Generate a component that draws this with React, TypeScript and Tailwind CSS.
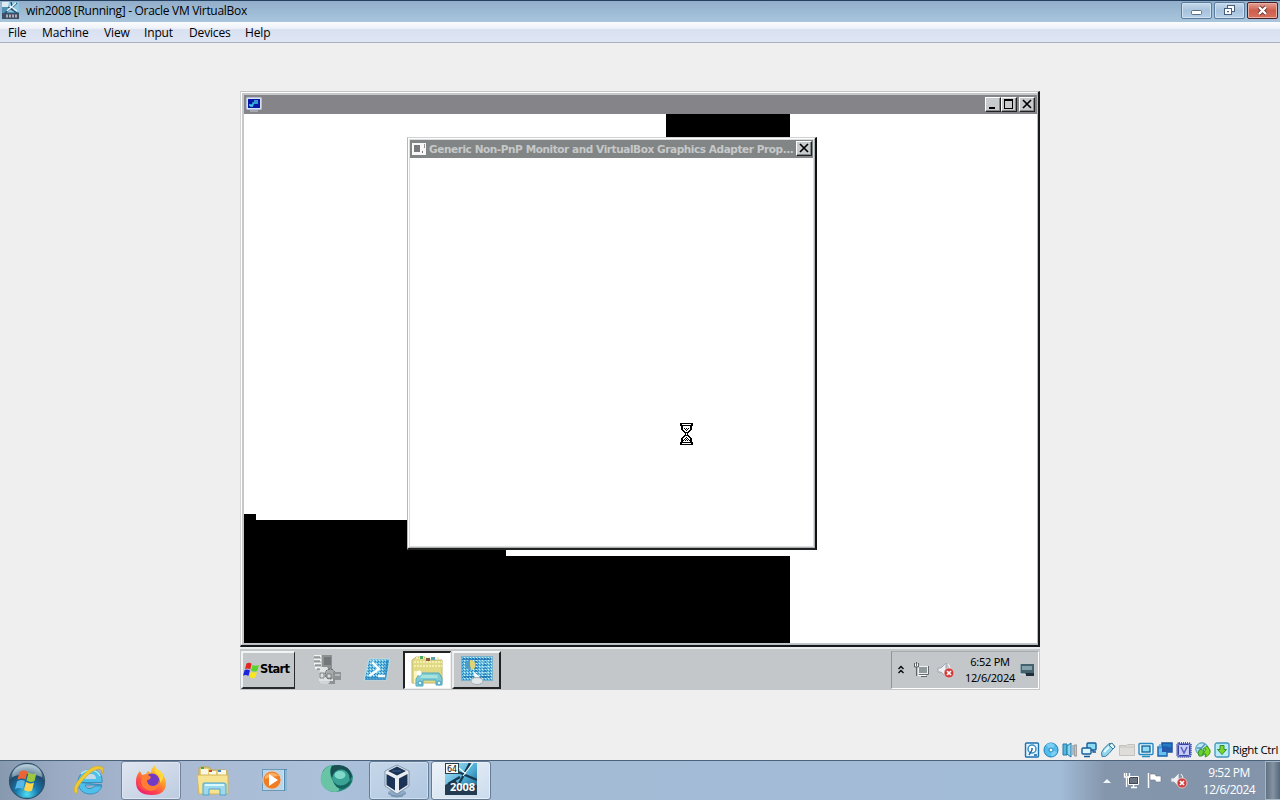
import React from "react";

type IconProps = { className?: string };

const VmMini = ({ className = "" }: IconProps) => (
  <svg className={className} width="17" height="17" viewBox="0 0 17 17">
    <rect width="17" height="17" fill="#4f8fb4" />
    <path d="M0 0H7V5H0Z" fill="#dceaf2" />
    <path d="M7 0H17V10H5Z" fill="#8cc7e2" />
    <path d="M15 1L2 12M6 5l9 6M9 0l2 8" stroke="#244a68" strokeWidth="1.3" />
    <path d="M14 1L5 9M8 4l7 5" stroke="#f2fafd" strokeWidth="1.2" />
    <rect y="11" width="17" height="6" fill="#3a5068" />
    <path d="M4 14h11" stroke="#b9a9b3" strokeWidth="3" strokeDasharray="2 1" />
  </svg>
);

const HostButton = ({ kind }: { kind: "min" | "restore" | "close" }) => (
  <div
    className={
      "flex items-center justify-center h-[17px] rounded-[2px] border " +
      (kind === "close"
        ? "w-[31px] border-[#4d2028] bg-linear-to-b from-[#e2a095] via-[#cf5d4d] to-[#d9705c] shadow-[inset_0_0_0_1px_#e9b0a6]"
        : "w-[31px] border-[#5b7c9e] bg-linear-to-b from-[#c5d9eb] via-[#a8c2dc] to-[#b5d0e8] shadow-[inset_0_0_0_1px_#cfe0ef]")
    }
  >
    <svg width="15" height="13" viewBox="0 0 15 13">
      {kind === "min" && <rect x="2.5" y="6.5" width="10" height="4" rx="1" fill="#fff" stroke="#5a7087" />}
      {kind === "restore" && (
        <g fill="#fff" stroke="#465f7f">
          <rect x="5.5" y="1.5" width="7" height="6" />
          <rect x="2.5" y="4.5" width="7" height="6" />
          <rect x="5" y="7" width="2" height="1.2" fill="#465f7f" stroke="none" />
        </g>
      )}
      {kind === "close" && (
        <g fill="none">
          <path d="M4 3l7 7M11 3l-7 7" stroke="#6a3a38" strokeWidth="4" />
          <path d="M4 3l7 7M11 3l-7 7" stroke="#fff" strokeWidth="2.3" />
        </g>
      )}
    </svg>
  </div>
);

const ClassicButton = ({ kind }: { kind: "min" | "max" | "close" }) => (
  <div className="w-4 h-[15px] bg-[#c7cbcd] border border-t-white border-l-white border-r-[#222] border-b-[#222] shadow-[inset_-1px_-1px_0_#85898c]">
    <svg width="14" height="13" viewBox="0 0 14 13" shapeRendering="crispEdges">
      {kind === "min" && <rect x="3" y="9" width="6" height="2" fill="#000" />}
      {kind === "max" && <path d="M2 1h9v10H2zM3 3v7h7V3z" fill="#000" fillRule="evenodd" />}
      {kind === "close" && (
        <path d="M3 2l8 8M11 2l-8 8" stroke="#000" strokeWidth="1.7" shapeRendering="auto" />
      )}
    </svg>
  </div>
);

const DisplayIcon = () => (
  <svg width="16" height="16" viewBox="0 0 16 16">
    <rect x="0.5" y="0.5" width="15" height="12" rx="1" fill="#d8e1f3" stroke="#b4bed4" />
    <rect x="2" y="2" width="12" height="9" fill="#0715a8" />
    <path d="M3 8h4V6h5M4 9h3M8 4h4" stroke="#3fc8dd" strokeWidth="1.3" fill="none" />
    <path d="M4 13h8v2H4z" fill="#a4a7ab" />
  </svg>
);

const Hourglass = () => (
  <svg width="13" height="22" viewBox="0 0 13 22" shapeRendering="crispEdges">
    <path d="M0 0h13v3h-1v4h-1v1h-1v1H9v1H8v2h1v1h1v1h1v1h1v4h1v3H0v-3h1v-4h1v-1h1v-1h1v-1h1v-2H4V9H3V8H2V7H1V3H0z" fill="#000" />
    <path d="M2 1h9v1H2zM3 3h7v4H9v1H8v1H7v4h1v1h1v1h1v4H3v-4h1v-1h1v-1h1V9H5V8H4V7H3zM2 20h9v1H2z" fill="#fff" />
    <path d="M4 5h1v1H4zM6 5h1v1H6zM8 5h1v1H8zM5 6h1v1H5zM7 6h1v1H7zM6 7h1v1H6zM6 9h1v1H6zM6 12h1v1H6zM6 14h1v1H6zM5 15h1v1H5zM7 15h1v1H7zM4 16h1v1H4zM6 16h1v1H6zM8 16h1v1H8zM3 17h1v1H3zM5 17h1v1H5zM7 17h1v1H7zM9 17h1v1H9z" fill="#000" />
  </svg>
);

const WinFlag = () => (
  <svg width="17" height="17" viewBox="0 0 17 17" className="shrink-0">
    <path d="M3.5 1.5Q6 0 8.6 1.8L7.2 7.4Q4.8 5.8 2 7z" fill="#e42621" />
    <path d="M9.6 3Q12.5 4.6 16 3L14.2 9Q11 10.3 8 8.5z" fill="#58d327" />
    <path d="M1.7 8Q4.5 6.8 7 8.6L5.4 14Q3 12.3 0 13.5z" fill="#1c25dd" />
    <path d="M7.8 9.6Q11 11.3 14 10L12.3 15.5Q9.2 17 6.3 15z" fill="#fae61d" />
  </svg>
);

const ServerIcon = () => (
  <svg width="30" height="32" viewBox="0 0 30 32">
    <path d="M10 1h10v14H10z" fill="#8e9192" />
    <path d="M12 3h7v8h-7z" fill="#73777a" />
    <path d="M2 2h7M2 6h7M2 10h7M3 14h6" stroke="#f2f4f4" strokeWidth="2" />
    <path d="M2 3h6M2 7h6M3 11h6M5 15h5" stroke="#66696b" />
    <path d="M8 13h7l2 3h5v11H7z" fill="#e0e3e3" />
    <circle cx="18" cy="20" r="5" fill="#a6aaac" stroke="#54585a" strokeDasharray="2 1" />
    <path d="M8 19h4v5H8zM15 20h4v4h-4z" fill="#dcdfe0" stroke="#696d70" strokeWidth=".8" />
    <path d="M21 18h8v8h-6v4h-7v-3h5z" fill="#8f9295" />
    <path d="M9 27h8v2H9zM23 21h5" stroke="#dbe0e1" fill="none" />
  </svg>
);

const PowerShellIcon = () => (
  <svg width="28" height="24" viewBox="0 0 28 24">
    <defs>
      <pattern id="dither" width="3" height="3" patternUnits="userSpaceOnUse">
        <rect width="3" height="3" fill="#65bde2" />
        <path d="M0 0h1v1H0zM2 1h1v1H2z" fill="#2c80bb" />
        <path d="M1 2h1v1H1z" fill="#c8f1f8" />
      </pattern>
    </defs>
    <path d="M6 1h21l-4 21H1z" fill="url(#dither)" stroke="#b8e0ee" />
    <path d="M23 2h3l-3 20H2l1-3h18z" fill="#267fb9" opacity=".65" />
    <path d="M9 4l7 7-10 7M15 18h7" fill="none" stroke="#f5fdff" strokeWidth="2.5" />
  </svg>
);

const GuestFolderIcon = () => (
  <svg width="34" height="32" viewBox="0 0 34 32">
    <path d="M1 5l4-3h9l3 3h14v23H1z" fill="#e0da84" stroke="#c0b770" />
    <path d="M3 7h28M3 11h28M5 3h24" stroke="#f4efb1" strokeWidth="2" strokeDasharray="2 1" />
    <path d="M9 1h3v3H9z" fill="#4eaa61" />
    <path d="M15 3h4v3h-4z" fill="#8c5948" />
    <path d="M20 2h4v3h-4z" fill="#5da4ae" />
    <path d="M3 16h4v12H3z" fill="#faf4bd" />
    <path d="M9 18h19l3 5v7h-6v-5H12v6H5v-7z" fill="#7fcbd2" stroke="#56a9bc" />
    <path d="M11 20h15l1 3H9z" fill="#a6e3dc" />
    <circle cx="9" cy="28" r="2" fill="#dff9f5" stroke="#3a98c7" />
    <circle cx="28" cy="28" r="2" fill="#dff9f5" stroke="#3a98c7" />
    <circle cx="8" cy="18" r="2.5" fill="#fff" />
  </svg>
);

const ControlPanelIcon = () => (
  <svg width="34" height="30" viewBox="0 0 34 30">
    <rect x="1.5" y="1.5" width="31" height="24" fill="url(#dither)" stroke="#79b1cc" />
    <path d="M3 4h28M4 22h27M16 3v20M25 3v20" stroke="#226caf" strokeWidth="1.3" strokeDasharray="2 1" />
    <circle cx="10" cy="10" r="5" fill="#4f9bc4" />
    <path d="M10 10V5a5 5 0 0 1 1 10z" fill="#ded376" />
    <path d="M20 7h8M20 12h10M20 18h9" stroke="#9cd7ea" strokeWidth="1.2" strokeDasharray="2 1" />
    <path d="M13 16l7 6-5 2z" fill="#f5fcff" />
    <ellipse cx="17" cy="26" rx="6" ry="3.5" fill="#e3e8ea" stroke="#a5aeb5" />
  </svg>
);

const NetIcon = () => (
  <svg width="17" height="17" viewBox="0 0 17 17">
    <path d="M5.5 4.5h10v8h-10z" fill="currentColor" stroke="#fff" />
    <path d="M7 6h7v5H7z" fill="#69747f" />
    <path d="M1.5 1v4h5V1M3.5 1v3M3.5 5v10M8 15.5h6M10.5 13v2" stroke="#fff" fill="none" strokeWidth="1.3" />
  </svg>
);

const GuestNetIcon = () => (
  <svg width="16" height="16" viewBox="0 0 16 16">
    <rect x="5.5" y="4.5" width="9" height="7" fill="#91999c" stroke="#eef1f1" />
    <path d="M1.5 1v4h4V1M3.5 0v4M3.5 5v9M8 14.5h6M10.5 12v2" stroke="#5e6366" fill="none" />
    <path d="M2.5 2v2M4.5 2v2M5 13.5h8" stroke="#fff" />
    <path d="M15.5 4v8.5H6" stroke="#62686b" fill="none" />
  </svg>
);

const MutedIcon = () => (
  <svg width="18" height="17" viewBox="0 0 18 17">
    <path d="M1 6h3l5-5v14l-5-5H1z" fill="#eef1f4" stroke="#939ba5" strokeWidth=".8" />
    <path d="M11 2q2 2 2 5" stroke="#fff" fill="none" />
    <circle cx="12" cy="11" r="5" fill="#ce3e3e" stroke="#ead1d1" strokeWidth=".8" />
    <path d="M10 9l4 4m0-4l-4 4" stroke="#fff" strokeWidth="1.7" />
  </svg>
);

const StatusIcons = () => (
  <div className="flex gap-[3px] items-center">
    <svg width="16" height="16" viewBox="0 0 16 16">
      <rect x="1.5" y="1" width="13" height="14" rx="1" fill="#e1f4ff" stroke="#1c72ae" strokeWidth="1.4" />
      <circle cx="8" cy="7" r="4" fill="#fff" stroke="#3a8ec0" strokeWidth="1.5" />
      <circle cx="8" cy="7" r="1" fill="#126aa6" />
      <path d="M8 8l-3 5M10 13h3" stroke="#155f9b" strokeWidth="1.4" fill="none" />
    </svg>
    <svg width="16" height="16" viewBox="0 0 16 16">
      <circle cx="8" cy="8" r="7" fill="#55bbea" stroke="#1680bf" />
      <path d="M8 8L3 3Q8-1 12 3zM8 8l6 2q-2 5-6 4z" fill="#7acff3" />
      <circle cx="8" cy="8" r="2" fill="#fff" stroke="#1784bd" />
    </svg>
    <svg width="16" height="16" viewBox="0 0 16 16">
      <path d="M1 2h4v11H1z" fill="#50b9dd" stroke="#2479a9" />
      <path d="M5 4l4-3v14l-4-3z" fill="#8ad7ef" stroke="#2875a4" />
      <path d="M11 3v10" stroke="#508cb4" />
      <rect x="12.5" y="3" width="2" height="11" fill="#c7c6c3" stroke="#a2a2a1" />
    </svg>
    <svg width="16" height="16" viewBox="0 0 16 16">
      <rect x="6" y="1" width="9" height="7" rx="1" fill="#8bd9f3" stroke="#175c96" strokeWidth="1.4" />
      <rect x="1" y="6" width="9" height="6" rx="1" fill="#dcf4fd" stroke="#175c96" strokeWidth="1.4" />
      <path d="M3 14.5h6M12 8v2h3" stroke="#175c96" strokeWidth="1.3" fill="none" />
    </svg>
    <svg width="16" height="16" viewBox="0 0 16 16">
      <path d="M2 14.5q-2-4 2-8l5-5q3-1 6 3l-6 7q-3 4-7 3z" fill="#8fd6ee" stroke="#477d99" />
      <path d="M9 3l3-2 3 4-2 2z" fill="#e2f9fc" stroke="#3c7896" />
      <path d="M4 10l5-5" stroke="#e6ffff" strokeWidth="1.8" />
    </svg>
    <svg width="16" height="16" viewBox="0 0 16 16">
      <path d="M.5 3.5h7l1-1h7v11H.5z" fill="#deddd9" stroke="#c3c2be" />
      <path d="M1 5h14" stroke="#c6c4bf" />
    </svg>
    <svg width="16" height="16" viewBox="0 0 16 16">
      <rect x="1" y="1.5" width="14" height="11" rx="1" fill="#e6faff" stroke="#2689c2" strokeWidth="1.4" />
      <rect x="4" y="4" width="8" height="6" fill="#8ddcf4" stroke="#155d97" strokeWidth="1.3" />
      <path d="M4 14.5h8" stroke="#278abd" strokeWidth="1.5" />
    </svg>
    <svg width="16" height="16" viewBox="0 0 16 16">
      <rect x="5" y="1" width="10" height="9" fill="#257dc6" stroke="#1854a0" strokeWidth="1.5" />
      <path d="M1 5h9v9H1z" fill="#6cbef0" stroke="#1761ab" strokeWidth="1.4" />
      <path d="M5 5h10v5H5" fill="#2459ab" />
      <path d="M3 2v5M1 4.5h4" stroke="#4fa5de" strokeWidth="1.3" />
    </svg>
    <svg width="16" height="16" viewBox="0 0 16 16">
      <rect x="1" y="1" width="14" height="14" rx="2" fill="#8d99df" stroke="#28339a" strokeWidth="1.5" strokeDasharray="1 1" />
      <rect x="2.5" y="2.5" width="11" height="11" rx="1" fill="#c3cbf6" stroke="#3842a4" />
      <path d="M5 5l3 6 3-6" stroke="#5961bd" strokeWidth="1.5" fill="none" />
    </svg>
    <svg width="16" height="16" viewBox="0 0 16 16">
      <circle cx="7" cy="7" r="6.2" fill="#b8e9f6" stroke="#398daf" />
      <path d="M3 10l7-8M2 6h5" stroke="#5b91b8" strokeWidth="1.4" />
      <path d="M8 7l4-3 3 4q1 5-5 7l1-3H8l3-5z" fill="#7bda24" stroke="#409719" />
      <path d="M4 14q-2-5 2-7l3 2-2 5z" fill="#66cc35" stroke="#39962c" />
    </svg>
    <svg width="16" height="16" viewBox="0 0 16 16">
      <rect x="1" y="1" width="14" height="14" rx="2" fill="#b8edf8" stroke="#4196be" strokeWidth="1.3" />
      <path d="M6 3.5h4v4h2.5L8 12.5l-4.5-5H6z" fill="#79d72d" stroke="#388b31" />
    </svg>
  </div>
);

const StartOrb = () => (
  <svg width="38" height="38" viewBox="0 0 38 38">
    <defs>
      <radialGradient id="orb" cx="50%" cy="88%" r="85%">
        <stop stopColor="#53ddf0" />
        <stop offset=".38" stopColor="#1678af" />
        <stop offset=".72" stopColor="#204a6b" />
        <stop offset="1" stopColor="#9bb8ca" />
      </radialGradient>
    </defs>
    <circle cx="19" cy="19" r="17.5" fill="url(#orb)" stroke="#31536d" strokeWidth="1.3" />
    <path d="M4 15Q5 2 19 2t15 13q-15-6-30 0" fill="#e5f1f6" opacity=".42" />
    <path d="M11.5 10q4-2.5 8-.5l-2 8q-4-2-8 .3z" fill="#ed6434" />
    <path d="M20.5 10.5q4 2.5 8 .5l-2 8q-4 2-8-.5z" fill="#9bc83f" />
    <path d="M9 19.5q4-2.5 8-.5l-2 8q-4-2-8 .3z" fill="#58b7e6" />
    <path d="M18 20q4 2.5 8 .5l-2 8q-4 2-8-.5z" fill="#ffd34d" />
  </svg>
);

const IeIcon = () => (
  <svg width="34" height="34" viewBox="0 0 34 34">
    <path d="M8 19.5h22c1-8-4-13-11-13S6 12 6 19s5 12 12 12c6 0 10-3 12-8h-7c-4 4-9 3-10-1h17z" fill="#4fc0ea" stroke="#2a87ba" strokeWidth=".8" />
    <path d="M13 16q1-5 6-5t5 5z" fill="#c3d9e9" />
    <path d="M9 11q4-4 11-4 6 1 8 6" stroke="#a8ecfa" strokeWidth="1.5" fill="none" />
    <path d="M4 31Q-2 26 10 13T30 4q3 2 0 7 1-5-3-5-6 0-15 10T6 28z" fill="#f1cb32" stroke="#c7a22f" strokeWidth=".6" />
  </svg>
);

const FirefoxIcon = () => (
  <svg width="32" height="32" viewBox="0 0 32 32">
    <defs>
      <linearGradient id="ff" x1=".85" y1="0" x2=".2" y2="1">
        <stop stopColor="#fff04d" />
        <stop offset=".42" stopColor="#ff9a28" />
        <stop offset=".72" stopColor="#ff454d" />
        <stop offset="1" stopColor="#e91977" />
      </linearGradient>
    </defs>
    <path d="M5 6l2 4 4-1 2-3 3 2q0-5 4-8 1 5 5 7 6 5 6 11 0 12-14 12Q1 30 1 17q0-7 4-11" fill="url(#ff)" />
    <circle cx="17" cy="16" r="7.5" fill="#713bc5" />
    <path d="M7 11q5-3 9 1-1 3-4 3 0 5 5 6 6 0 7-6 1 10-8 11-9-1-10-9z" fill="#ff7d34" />
    <path d="M20 7q6 4 5 11 4-4 3-9-3-4-8-6z" fill="#ffd83a" />
    <path d="M4 13q2 10 9 13-7 0-10-6z" fill="#ff5a3c" opacity=".6" />
  </svg>
);

const ExplorerIcon = () => (
  <svg width="34" height="32" viewBox="0 0 34 32">
    <path d="M3 4q0-2 2-2h8l2 3h14q2 0 2 2v21H3z" fill="#e8cd72" stroke="#c4a552" />
    <path d="M5 4h7v6H5zM13 6h7v5h-7zM22 5h8v7h-8z" fill="#f9f7e6" />
    <path d="M5 2h3v2H5z" fill="#38a94d" />
    <path d="M13 5h3v2h-3z" fill="#c64b38" />
    <path d="M22 5h3v2h-3z" fill="#4087bf" />
    <path d="M1 10h31v19H3z" fill="#f6e493" stroke="#d4b65b" />
    <path d="M7 30V19q0-1 1-1h20q2 0 2 2v10h-6v-6H13v6z" fill="#9dd8ef" stroke="#4ba4cc" />
    <path d="M9 19h19v2H9z" fill="#d7f8ff" />
  </svg>
);

const MediaIcon = () => (
  <svg width="28" height="25" viewBox="0 0 28 25">
    <rect x="1.5" y="1.5" width="21" height="21" fill="#b6d7ec" stroke="#6998b9" />
    <path d="M23 1h3v22h-3z" fill="#5587ae" />
    <path d="M22.5 2v20M25 2v21" stroke="#c8e6f6" />
    <circle cx="11" cy="12" r="9.2" fill="#f07c23" stroke="#d5cfca" strokeWidth="1.3" />
    <path d="M4 8q7-7 14 0-7 0-14 3z" fill="#ffc382" opacity=".7" />
    <path d="M8 6l9 6-9 6z" fill="#fff" />
  </svg>
);

const GreenOrbIcon = () => (
  <svg width="34" height="30" viewBox="0 0 34 30">
    <path d="M2 9Q5 0 17 1q14 1 16 12 0 10-12 14-10 3-16-3-5-7-3-15" fill="#258d7d" />
    <path d="M2 9Q6 2 12 1q-3 6-1 12t8 11q1 4-5 4Q4 27 1 19q-1-6 1-10" fill="#69c4a6" />
    <path d="M12 2q16-4 20 10l-2 4q-2-8-9-9-7 0-9 7-3-7 0-12" fill="#174f52" />
    <circle cx="21" cy="14" r="8.5" fill="#3aa396" />
    <ellipse cx="20" cy="11" rx="5.5" ry="4" fill="#80dac9" />
    <path d="M13 17q7 9 17 0l2-1q-3 8-10 9-7-1-9-8" fill="#14635f" />
  </svg>
);

const VBoxIcon = () => (
  <svg width="30" height="34" viewBox="0 0 30 34">
    <ellipse cx="15" cy="29" rx="9" ry="4" fill="#7b98b5" opacity=".65" />
    <path d="M15 1l12 6v15l-12 8L3 22V7z" fill="#e8edf2" stroke="#5b7894" strokeWidth=".7" />
    <path d="M15 2.5L24 7 15 11.5 6 7zM4.5 10l8.5 4.5v12L4.500 21zM25.5 10L17 14.5v12l8.5-5.500z" fill="#1b3356" />
    <path d="M10 7h9" stroke="#315579" strokeWidth="1.5" />
    <path d="M6 29q9 6 18 0M9 32q6 2 12 0" fill="none" stroke="#7692ae" />
  </svg>
);

const Server2008Icon = () => (
  <svg width="32" height="32" viewBox="0 0 32 32">
    <defs>
      <linearGradient id="s8" x1="0" y1="0" x2="1" y2="1">
        <stop stopColor="#b5e8f9" />
        <stop offset=".55" stopColor="#4babd3" />
        <stop offset="1" stopColor="#174a70" />
      </linearGradient>
    </defs>
    <rect width="32" height="32" fill="url(#s8)" />
    <path d="M0 22h32v10H0zM0 22l10-5 4 5z" fill="#243c52" />
    <path d="M25 0L14 21M13 9l19 8M3 21l12-7" stroke="#17374e" strokeWidth="2.4" />
    <path d="M28 0L18 13M14 5l7 6" stroke="#e9fcff" strokeWidth="1.2" />
    <rect x=".5" y=".5" width="13" height="10" fill="#f8fafa" stroke="#263d4d" />
    <text x="7" y="8.6" textAnchor="middle" fontFamily="DejaVu Sans, sans-serif" fontSize="8" fill="#111">64</text>
    <text x="17.5" y="28" textAnchor="middle" fontFamily="Open Sans, sans-serif" fontWeight="700" fontSize="11" fill="#fff">2008</text>
  </svg>
);

const FlagIcon = () => (
  <svg width="17" height="17" viewBox="0 0 17 17">
    <path d="M2.5 1v15" stroke="#f8f8f8" strokeWidth="1.5" />
    <path d="M4 2h5l1 2h5v6h-5l-1-2H4z" fill="#fff" stroke="#6b7584" strokeWidth=".6" />
  </svg>
);

function Dialog() {
  return (
    <div className="absolute left-[163px] top-[23px] w-[410px] h-[413px] bg-white border border-t-[#cfd1d2] border-l-[#b5b7b9] border-r-2 border-b-2 border-r-[#111] border-b-[#222]">
      <div className="h-full border border-t-white border-l-white border-r-[#aeb1b3] border-b-[#aeb1b3] flex flex-col p-px shadow-[inset_0_0_0_1px_#dcdddd]">
        <div className="h-[18px] shrink-0 bg-[#828586] flex items-center pl-[2px] pr-px">
          <svg width="14" height="12" viewBox="0 0 14 12" className="mr-[3px] shrink-0">
            <path d="M0 0h14v12H0z" fill="#f8f8f8" />
            <path d="M2 2h6v7H2zM10 8h1v2h-1z" fill="#77797a" />
            <path d="M12.5 1v4" stroke="#999" />
          </svg>
          <span className="flex-1 whitespace-nowrap font-['DejaVu_Sans',sans-serif] font-bold text-[10.5px] leading-[18px] tracking-[-0.42px] text-[#c6c9c9]">Generic Non-PnP Monitor and VirtualBox Graphics Adapter Prop...</span>
          <div className="pb-px"><ClassicButton kind="close" /></div>
        </div>
      </div>
    </div>
  );
}

function GuestWindow() {
  return (
    <div className="h-[556px] w-full border border-l-[#d4d4d4] border-t-[#c4c4c4] border-r-2 border-b-2 border-r-[#171a1c] border-b-[#171a1c] bg-[#c5c8ca]">
      <div className="h-full border border-t-white border-l-white border-r-[#b9bcbe] border-b-[#b9bcbe] py-px pl-[2px] flex flex-col">
        <div className="h-[20px] shrink-0 border-t border-[#c5c8ca] flex items-center bg-[#858589] px-[2px]">
          <DisplayIcon />
          <div className="flex-1" />
          <div className="flex pb-px">
            <ClassicButton kind="min" />
            <ClassicButton kind="max" />
            <div className="ml-[2px]"><ClassicButton kind="close" /></div>
          </div>
        </div>
        <div className="relative flex-1 bg-white overflow-hidden">
          <div className="absolute left-[422px] top-0 w-[124px] h-[24px] bg-black" />
          <div className="absolute left-0 top-[400px] w-3 h-[130px] bg-black" />
          <div className="absolute left-0 top-[406px] w-[262px] h-[124px] bg-black" />
          <div className="absolute left-[262px] top-[442px] w-[284px] h-[88px] bg-black" />
          <Dialog />
          <div className="absolute left-[436px] top-[309px]"><Hourglass /></div>
        </div>
      </div>
    </div>
  );
}

function GuestTaskbar() {
  return (
    <div className="h-[43px] bg-[#c3c7ca] border-t-2 border-t-[#eceeee] flex pt-[2px] pb-px font-['Noto_Sans',sans-serif]">
      <div className="w-[54px] ml-px border-2 border-t-[#f2f4f4] border-l-[#f2f4f4] border-r border-r-[#27292b] border-b-[#27292b] flex items-center">
        <WinFlag />
        <span className="font-bold font-['DejaVu_Sans',sans-serif] text-[11.5px] tracking-[-0.65px] leading-none">Start</span>
      </div>
      <div className="w-[59px] ml-[2px] flex items-center justify-center"><ServerIcon /></div>
      <div className="w-[45px] flex items-center justify-center pr-[3px]"><PowerShellIcon /></div>
      <div className="w-[48px] ml-[2px] bg-white border-t-2 border-l-2 border-[#222] border-r border-b border-r-[#eee] border-b-[#eee] flex items-center justify-center"><GuestFolderIcon /></div>
      <div className="w-[49px] ml-[1px] border-2 border-t-[#f4f5f5] border-l-[#eceeee] border-r-[#222] border-b-[#222] flex items-center justify-center"><ControlPanelIcon /></div>
      <div className="flex-1" />
      <div className="w-[148px] border border-l-[#8e9395] border-t-[#a5aaac] border-r-white border-b-white flex items-center mr-px">
        <svg className="ml-[5px]" width="8" height="10" viewBox="0 0 8 10"><path d="M1.5 4L4 1.5 6.5 4M1.5 8L4 5.5 6.5 8" stroke="#000" strokeWidth="1.3" fill="none" /></svg>
        <div className="ml-[8px]"><GuestNetIcon /></div>
        <div className="ml-[8px]"><MutedIcon /></div>
        <div className="ml-[9px] w-[52px] text-center text-[11px] leading-[16px] tracking-[-0.25px] whitespace-nowrap"><div>6:52 PM</div><div>12/6/2024</div></div>
        <svg className="ml-[4px]" width="15" height="14" viewBox="0 0 15 14"><path d="M0 1h14v10H0z" fill="#45616d" /><path d="M2 3h10v4H2z" fill="#82a1aa" /><path d="M6 10h8v3H6z" fill="#1e303b" /><path d="M0 1v10h5" stroke="#d8eef2" fill="none" /></svg>
      </div>
    </div>
  );
}

export default function App() {
  return (
    <div className="w-[1280px] h-[800px] overflow-hidden flex flex-col bg-[#efefef] text-black font-['Open_Sans','Noto_Sans',sans-serif]">
      <div className="h-[22px] shrink-0 border-t border-[#24405f] bg-linear-to-b from-[#92adc9] via-[#9dbbd5] to-[#a9c5dc] flex items-start">
        <VmMini className="ml-[2px] mt-px" />
        <span className="ml-[7px] mt-[1px] text-[12px] leading-[18px] tracking-[-0.3px] whitespace-nowrap">win2008 [Running] - Oracle VM VirtualBox</span>
        <div className="flex-1" />
        <div className="flex gap-[2px] mt-px mr-[2px]"><HostButton kind="min" /><HostButton kind="restore" /><HostButton kind="close" /></div>
      </div>
      <div className="h-[21px] shrink-0 border-b border-[#a9b1c1] bg-[linear-gradient(#fbfcfe_0%,#eef1f8_32%,#d9e1f1_38%,#dfe5f3_100%)] flex pl-2 text-[12px] leading-[21px] tracking-[-0.15px]">
        <span className="w-[34px]">File</span><span className="w-[62px]">Machine</span><span className="w-[40px]">View</span><span className="w-[45px]">Input</span><span className="w-[56px]">Devices</span><span>Help</span>
      </div>
      <div className="flex-1 pt-[48px] pl-[240px]">
        <div className="w-[800px] h-[599px] flex flex-col"><GuestWindow /><GuestTaskbar /></div>
      </div>
      <div className="h-[20px] shrink-0 flex items-center justify-end pr-[2px]">
        <StatusIcons />
        <span className="ml-[2px] text-[11.5px] leading-[20px] tracking-[-0.35px] whitespace-nowrap">Right Ctrl</span>
      </div>
      <div className="h-[40px] shrink-0 border-t border-[#4c627b] flex items-center bg-[linear-gradient(90deg,#8799af_0px,#9aabc3_60px,#aabbd3_180px,#abc0da_330px,#a4bbd5_500px,#a2bbd7_1060px,#8496ac_1105px,#8394aa_1280px)]">
        <div className="w-[54px] flex justify-center"><StartOrb /></div>
        <div className="w-[67px] flex justify-center pl-[3px] pb-[2px]"><IeIcon /></div>
        <div className="w-[60px] h-[39px] rounded-[3px] border border-[#72839b] bg-linear-to-br from-[#e0e6f0] to-[#bdcbe0] shadow-[inset_0_0_0_1px_#dce5f0] flex items-center justify-center"><FirefoxIcon /></div>
        <div className="w-[64px] flex justify-center"><ExplorerIcon /></div>
        <div className="w-[60px] flex justify-center"><MediaIcon /></div>
        <div className="w-[64px] flex justify-center pb-[4px]"><GreenOrbIcon /></div>
        <div className="w-[60px] h-[39px] rounded-[3px] border border-[#657c97] bg-linear-to-br from-[#c6d6e9] to-[#b1c8e1] shadow-[inset_0_0_0_1px_#cfdeed] flex items-center justify-center pr-[4px]"><VBoxIcon /></div>
        <div className="ml-[2px] w-[60px] h-[39px] rounded-[3px] border border-[#657c97] bg-linear-to-br from-[#edf2f8] to-[#cbdced] shadow-[inset_0_0_0_1px_#e8eff7] flex items-center justify-center pb-[3px]"><Server2008Icon /></div>
        <div className="flex-1" />
        <svg width="8" height="5" viewBox="0 0 8 5"><path d="M0 5l4-4 4 4z" fill="#f1f4f8" /></svg>
        <div className="ml-[12px] text-[#3d4a59]"><NetIcon /></div>
        <div className="ml-[6px]"><FlagIcon /></div>
        <div className="ml-[7px]"><MutedIcon /></div>
        <div className="ml-[9px] w-[64px] text-center text-[12px] leading-[17px] tracking-[-0.5px] text-white whitespace-nowrap pt-[1px]"><div>9:52 PM</div><div>12/6/2024</div></div>
        <div className="ml-[4px] w-[15px] h-[39px] border border-r-0 border-[#a9b6c4] bg-linear-to-r from-[#627282] via-[#8493a4] to-[#56687c]" />
      </div>
    </div>
  );
}
